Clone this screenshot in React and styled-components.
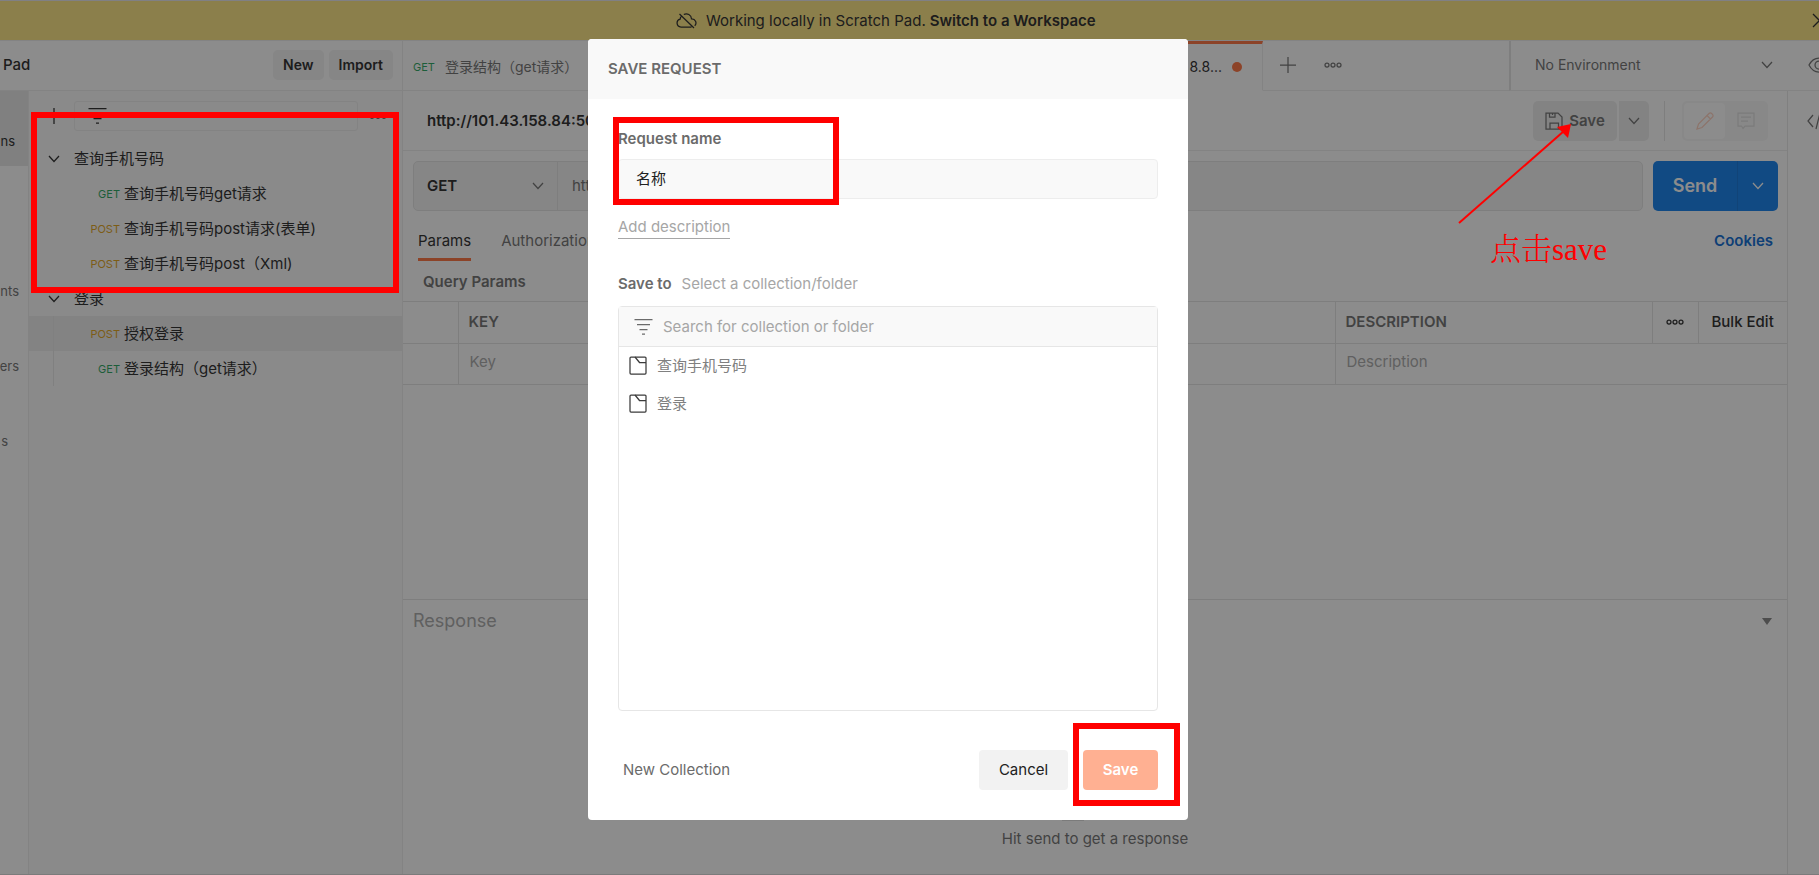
import React, { useState } from 'react';
import styled, { createGlobalStyle } from 'styled-components';

const GlobalStyle = createGlobalStyle`
  * {
    box-sizing: border-box;
  }

  html, body, #root {
    height: 100%;
  }

  body {
    margin: 0;
    overflow: hidden;
    background: #fff;
    color: #212121;
    font-family: Inter, "Noto Sans CJK SC", sans-serif;
    font-size: 15px;
    line-height: 20px;
  }

  button, input, select {
    font: inherit;
    color: inherit;
    border: none;
    background: none;
    padding: 0;
    margin: 0;
    outline: none;
  }

  button {
    cursor: pointer;
  }

  a {
    text-decoration: none;
  }
`;

const Page = styled.div`
  position: relative;
  display: flex;
  flex-direction: column;
  height: 100%;
  overflow: hidden;
`;

const Banner = styled.div`
  display: flex;
  align-items: center;
  height: 41px;
  flex: none;
  padding-left: 676px;
  background: #fde47c;
  border-top: 1px solid #e6e6ee;
  border-bottom: 1px solid #ededed;
`;

const BannerText = styled.span`
  margin-left: 9px;
`;

const BannerLink = styled.a`
  margin-left: 4px;
  color: #212121;
  font-weight: 600;
`;

const BannerClose = styled.button`
  display: flex;
  margin-left: auto;
  margin-right: -8px;
`;

const Columns = styled.div`
  display: flex;
  flex: 1;
  min-height: 0;
  border-bottom: 1px solid #dcdcdc;
`;

const Side = styled.div`
  display: flex;
  flex-direction: column;
  width: 403px;
  flex: none;
  border-right: 1px solid #ededed;
`;

const SideHeader = styled.header`
  display: flex;
  align-items: center;
  gap: 5px;
  height: 50px;
  flex: none;
  padding: 0 9px 1px 3px;
  border-bottom: 1px solid #ededed;
`;

const WorkspaceName = styled.span`
  flex: 1;
  font-weight: 500;
`;

const SmallButton = styled.button`
  height: 30px;
  padding: 0 10px;
  border-radius: 5px;
  background: #f2f2f2;
  font-size: 14px;
  font-weight: 600;
`;

const SideBody = styled.div`
  display: flex;
  flex: 1;
`;

const Rail = styled.nav`
  width: 29px;
  flex: none;
  border-right: 1px solid #ededed;
`;

const RailItem = styled.button`
  display: flex;
  align-items: flex-end;
  justify-content: flex-end;
  width: 100%;
  height: 75px;
  padding: 0 ${({ $inset }) => $inset}px 15px 0;
  background: ${({ $active }) => ($active ? '#e6e6e6' : 'none')};
  color: ${({ $active }) => ($active ? '#212121' : '#6b6b6b')};
  font-size: 13px;
`;

const Tree = styled.div`
  flex: 1;
  min-width: 0;
  background: #fafafa;
`;

const TreeTools = styled.div`
  display: flex;
  align-items: center;
  height: 50px;
  padding: 0 15px 0 17px;
`;

const IconButton = styled.button`
  display: flex;
  align-items: center;
  justify-content: center;
  flex: none;
`;

const FilterBox = styled.label`
  display: flex;
  align-items: center;
  flex: 1;
  height: 30px;
  margin: 0 11px 0 12px;
  padding-left: 13px;
  border: 1px solid #ededed;
  border-radius: 3px;

  input {
    flex: 1;
    min-width: 0;
  }
`;

const TreeRow = styled.div`
  display: flex;
  align-items: center;
  height: 35px;
  padding-left: ${({ $folder }) => ($folder ? 19 : 24)}px;
  background: ${({ $active }) => ($active ? '#ededed' : 'none')};
`;

const TreeGuide = styled.span`
  align-self: stretch;
  border-left: 1px solid ${({ $visible }) => ($visible ? '#e6e6e6' : 'transparent')};
`;

const FolderName = styled.span`
  margin-left: 14px;
`;

const Method = styled.span`
  color: ${({ $type }) => ($type === 'GET' ? '#1fa35b' : '#e0a010')};
  font-size: 11px;
`;

const TreeMethod = styled(Method)`
  width: 66px;
  margin-right: 4px;
  text-align: right;
`;

const Workbench = styled.main`
  display: flex;
  flex-direction: column;
  flex: 1;
  min-width: 0;
`;

const TabBar = styled.div`
  display: flex;
  height: 50px;
  flex: none;
`;

const Tab = styled.div`
  display: flex;
  align-items: center;
  justify-content: ${({ $active }) => ($active ? 'flex-end' : 'flex-start')};
  gap: 10px;
  width: ${({ $active }) => ($active ? 260 : 600)}px;
  flex: none;
  padding: ${({ $active }) => ($active ? '0 20px 0 10px' : '0 10px')};
  border-top: 3px solid ${({ $active }) => ($active ? '#ff6c37' : 'transparent')};
  border-right: ${({ $active }) => ($active ? '1px solid #ededed' : 'none')};
  border-bottom: 1px solid ${({ $active }) => ($active ? '#fff' : '#ededed')};
  color: ${({ $active }) => ($active ? '#212121' : '#6b6b6b')};
  font-size: 14px;
`;

const Unsaved = styled.i`
  width: 10px;
  height: 10px;
  border-radius: 50%;
  background: #ff6c37;
`;

const TabTools = styled.div`
  display: flex;
  align-items: center;
  gap: 28px;
  flex: 1;
  padding: 0 0 1px 17px;
  border-bottom: 1px solid #ededed;
  color: #6b6b6b;
`;

const Environment = styled.label`
  display: flex;
  align-items: center;
  width: 310px;
  padding: 0 0 1px 24px;
  border-left: 2px solid #e3e3e3;
  border-bottom: 1px solid #ededed;
  color: #6b6b6b;
  font-size: 14px;

  select {
    appearance: none;
    width: 226px;
    flex: none;
  }

  svg:last-child {
    margin-left: 35px;
  }
`;

const Work = styled.div`
  display: flex;
  flex: 1;
  min-height: 0;
`;

const Request = styled.section`
  display: flex;
  flex-direction: column;
  flex: 1;
  min-width: 0;
`;

const RightRail = styled.aside`
  width: 32px;
  flex: none;
  padding: 20px 0 0 19px;
  border-left: 1px solid #e6e6e6;
  overflow: hidden;
  color: #6b6b6b;
`;

const TitleRow = styled.div`
  display: flex;
  align-items: center;
  height: 60px;
  flex: none;
  padding: 0 19px 0 24px;
  border-bottom: 1px solid #ededed;
`;

const RequestTitle = styled.span`
  flex: 1;
  font-weight: 600;
`;

const GreyButton = styled.button`
  display: flex;
  align-items: center;
  justify-content: center;
  gap: 6px;
  width: ${({ $wide }) => ($wide ? 84 : 30)}px;
  height: 40px;
  margin-right: ${({ $wide }) => ($wide ? 2 : 15)}px;
  border-radius: ${({ $wide }) => ($wide ? '5px' : '0 5px 5px 0')};
  background: #ededed;
  color: #6b6b6b;
  font-weight: 600;
`;

const Separator = styled.span`
  width: 1px;
  height: 40px;
  margin-right: 17px;
  background: #e3e3e3;
`;

const ModeSwitch = styled.div`
  display: flex;
  align-items: center;
  width: 86px;
  height: 40px;
  padding: 2px;
  border-radius: 5px;
  background: #f7f7f7;
`;

const ModeButton = styled.button`
  display: flex;
  align-items: center;
  justify-content: center;
  width: 41px;
  height: 36px;
  border-radius: 4px;
  background: ${({ $active }) => ($active ? '#fff' : 'none')};
  color: ${({ $active }) => ($active ? '#ffcfbd' : '#dcdcdc')};
`;

const UrlRow = styled.div`
  display: flex;
  gap: 10px;
  padding: 10px 9px 0 10px;
`;

const UrlBox = styled.div`
  display: flex;
  flex: 1;
  height: 50px;
  border: 1px solid #e3e3e3;
  border-radius: 5px;
  background: #f2f2f2;
  color: #6b6b6b;

  input {
    flex: 1;
    padding-left: 14px;
  }
`;

const MethodSelect = styled.label`
  display: flex;
  align-items: center;
  width: 144px;
  padding: 0 13px;
  border-right: 1px solid #e3e3e3;

  select {
    appearance: none;
    flex: 1;
    color: #212121;
    font-weight: 600;
  }
`;

const SendGroup = styled.div`
  display: flex;
  width: 125px;
  border-radius: 5px;
  overflow: hidden;
  background: #097bed;
  color: #fff;
`;

const SendButton = styled.button`
  flex: 1;
  border-right: 1px solid #086fd6;
  font-size: 18px;
  font-weight: 600;
`;

const SendMore = styled(IconButton)`
  width: 40px;
`;

const SectionTabs = styled.div`
  display: flex;
  align-items: flex-start;
  gap: 30px;
  height: 60px;
  padding: 20px 14px 0 15px;
`;

const SectionTab = styled.button`
  height: 30px;
  padding-bottom: 7px;
  border-bottom: 3px solid ${({ $active }) => ($active ? '#ff6c37' : 'transparent')};
  color: ${({ $active }) => ($active ? '#212121' : '#6b6b6b')};
`;

const Cookies = styled.a`
  margin-left: auto;
  color: #0265d2;
  font-weight: 600;
`;

const ParamsTitle = styled.h2`
  margin: 0;
  padding: 1px 20px 9px;
  color: #6b6b6b;
  font-size: 15px;
  font-weight: 600;
`;

const ParamsTable = styled.table`
  width: 100%;
  table-layout: fixed;
  border-collapse: collapse;
  border-top: 1px solid #e3e3e3;

  th, td {
    height: 41px;
    padding: 0 10px;
    border-bottom: 1px solid #e3e3e3;
    border-left: 1px solid #e3e3e3;
    text-align: left;
    white-space: nowrap;
  }

  th {
    height: 42px;
    padding-bottom: 1px;
    color: #6b6b6b;
    font-weight: 600;
  }

  td {
    padding: 0 11px 4px;
  }

  th:first-child, td:first-child {
    border-left: none;
  }

  input {
    width: 100%;
  }

  input::placeholder {
    color: #a6a6a6;
    opacity: 1;
  }
`;

const ColumnMenu = styled(IconButton)`
  width: 100%;
  color: #212121;
`;

const BulkEdit = styled.button`
  padding-left: 3px;
  color: #212121;
  font-weight: 500;
`;

const Response = styled.section`
  display: flex;
  flex-direction: column;
  justify-content: space-between;
  height: 275px;
  flex: none;
  margin-top: auto;
  border-top: 1px solid #e3e3e3;
`;

const ResponseHead = styled.div`
  display: flex;
  align-items: center;
  justify-content: space-between;
  height: 42px;
  padding: 0 15px 0 10px;
  color: #a6a6a6;
  font-size: 18px;
`;

const ResponseHint = styled.p`
  display: flex;
  flex-direction: column;
  align-items: center;
  gap: 7px;
  margin: 0;
  padding-bottom: 25px;
  color: #6b6b6b;
`;

const Overlay = styled.div`
  position: absolute;
  inset: 0;
  background: rgba(26, 26, 26, 0.5);
`;

const Dialog = styled.form`
  position: absolute;
  top: 39px;
  left: 588px;
  width: 600px;
  border-radius: 4px;
  background: #fff;
  overflow: hidden;
`;

const DialogTitle = styled.h1`
  margin: 0;
  padding: 20px;
  background: #f9f9f9;
  color: #6b6b6b;
  font-size: 15px;
  font-weight: 600;
`;

const DialogBody = styled.div`
  display: flex;
  flex-direction: column;
  align-items: flex-start;
  padding: 30px 30px 0;
`;

const FieldLabel = styled.label`
  color: #6b6b6b;
  font-weight: 600;
`;

const NameInput = styled.input`
  && {
    width: 100%;
    height: 40px;
    margin-top: 10px;
    padding: 0 17px 3px;
    border: 1px solid #ededed;
    border-radius: 4px;
    background: #f9f9f9;
  }
`;

const AddDescription = styled.button`
  && {
    margin-top: 18px;
    padding-bottom: 1px;
    border-bottom: 1px solid #a6a6a6;
    color: #a6a6a6;
  }
`;

const SaveTo = styled.p`
  display: flex;
  gap: 10px;
  margin: 35px 0 12px;
  color: #a6a6a6;

  strong {
    color: #6b6b6b;
    font-weight: 600;
  }
`;

const Picker = styled.div`
  width: 100%;
  height: 405px;
  border: 1px solid #e6e6e6;
  border-radius: 4px;
`;

const PickerSearch = styled.label`
  display: flex;
  align-items: center;
  gap: 10px;
  height: 40px;
  padding: 0 15px;
  border-bottom: 1px solid #e6e6e6;
  background: #f9f9f9;
  color: #6b6b6b;

  input {
    flex: 1;
  }

  input::placeholder {
    color: #a6a6a6;
    opacity: 1;
  }
`;

const PickerItem = styled.button`
  display: flex;
  align-items: center;
  gap: 10px;
  width: 100%;
  height: 38px;
  padding: 0 10px 1px;
  color: #808080;

  svg {
    color: #3b3b3b;
  }
`;

const DialogFooter = styled.footer`
  display: flex;
  align-items: center;
  padding: 39px 30px 30px 35px;
`;

const NewCollection = styled.button`
  margin-right: auto;
  color: #6b6b6b;
`;

const DialogButton = styled.button`
  height: 40px;
  width: ${({ $primary }) => ($primary ? 75 : 89)}px;
  margin-left: ${({ $primary }) => ($primary ? 15 : 0)}px;
  border-radius: 4px;
  background: ${({ $primary }) => ($primary ? '#ffb092' : '#f2f2f2')};
  color: ${({ $primary }) => ($primary ? '#fff' : '#212121')};
  font-weight: ${({ $primary }) => ($primary ? 600 : 400)};
`;

const Highlight = styled.div`
  position: absolute;
  top: ${({ $top }) => $top}px;
  left: ${({ $left }) => $left}px;
  width: ${({ $width }) => $width}px;
  height: ${({ $height }) => $height}px;
  border: 6px solid #f00;
  pointer-events: none;
`;

const Arrow = styled.svg`
  position: absolute;
  top: 122px;
  left: 1455px;
  pointer-events: none;
`;

const Note = styled.span`
  position: absolute;
  top: 230px;
  left: 1490px;
  color: #f00;
  font-family: "Liberation Serif", "Noto Serif CJK SC", "Noto Sans CJK SC", serif;
  font-size: 31px;
  font-weight: 300;
  line-height: 40px;
`;

const Icon = styled.svg`
  flex: none;
  fill: none;
  stroke: currentColor;
  stroke-width: 1.25;
`;

const Svg = ({ size = 20, width = size, height = size, children }) => (
  <Icon width={width} height={height} viewBox={`0 0 ${width} ${height}`} aria-hidden="true">
    {children}
  </Icon>
);

const Chevron = () => (
  <Svg width={12} height={8}>
    <path d="M1 1l5 5.5L11 1" />
  </Svg>
);

const Filter = () => (
  <Svg width={19} height={18}>
    <path d="M0.5 1.5h18M3 6.5h13M5.500 11.500h8M8 16h3" />
  </Svg>
);

const Dots = () => (
  <Svg width={18} height={6}>
    <circle cx="3" cy="3" r="2" />
    <circle cx="9" cy="3" r="2" />
    <circle cx="15" cy="3" r="2" />
  </Svg>
);

const Plus = ({ size }) => (
  <Svg size={size}>
    <path d={`M${size / 2} 0v${size}M0 ${size / 2}h${size}`} />
  </Svg>
);

const CloudOff = () => (
  <Svg width={21} height={16}>
    <path d="M3.500 1l14.500 14M15.500 14H5a4 4 0 0 1-.8-7.900c0-1.100.5-2.100 1.200-2.900M7.800 1.500a5.200 5.200 0 0 1 7.700 4.300 4.100 4.100 0 0 1 3.200 7" />
  </Svg>
);

const Floppy = () => (
  <Svg width={18} height={18}>
    <path d="M1 1h12l4 4v12H1zM4.500 1v4h5.500V1M7.500 1v2M5 17v-6h8.500v6" />
  </Svg>
);

const Pencil = () => (
  <Svg width={18} height={18}>
    <path d="M1 17l1.500-5L13 1.500a1.800 1.800 0 0 1 2.600 0l.9.9a1.800 1.800 0 0 1 0 2.600L6 15.500zM11 3.500L14.500 7" />
  </Svg>
);

const Comment = () => (
  <Svg width={18} height={18}>
    <path d="M1 1h16v13H8l-2 2.500L4.500 14H1zM4 5h10M4 9h7" />
  </Svg>
);

const Eye = () => (
  <Svg width={22} height={16}>
    <path d="M1 8c2-4 5.500-7 10-7s8 3 10 7c-2 4-5.500 7-10 7S3 12 1 8z" />
    <circle cx="11" cy="8" r="4" />
  </Svg>
);

const Collection = () => (
  <Svg width={18} height={19}>
    <rect x="1" y="1" width="16" height="17" rx="1" />
    <path d="M6 1l4.500 5.500H17" />
  </Svg>
);

const railItems = [
  { label: 'ns', inset: 13, active: true },
  { label: '', inset: 0 },
  { label: 'nts', inset: 9 },
  { label: 'ers', inset: 9 },
  { label: 's', inset: 20 },
];

const collections = [
  {
    name: '查询手机号码',
    requests: [
      { method: 'GET', name: '查询手机号码get请求' },
      { method: 'POST', name: '查询手机号码post请求(表单)' },
      { method: 'POST', name: '查询手机号码post（Xml)' },
    ],
  },
  {
    name: '登录',
    guide: true,
    requests: [
      { method: 'POST', name: '授权登录', active: true },
      { method: 'GET', name: '登录结构（get请求）' },
    ],
  },
];

const Sidebar = () => (
  <Side>
    <SideHeader>
      <WorkspaceName>Pad</WorkspaceName>
      <SmallButton>New</SmallButton>
      <SmallButton>Import</SmallButton>
    </SideHeader>
    <SideBody>
      <Rail>
        {railItems.map((item, index) => (
          <RailItem key={index} $inset={item.inset} $active={item.active}>
            {item.label}
          </RailItem>
        ))}
      </Rail>
      <Tree>
        <TreeTools>
          <IconButton aria-label="Create"><Plus size={16} /></IconButton>
          <FilterBox>
            <Filter />
            <input aria-label="Filter" />
          </FilterBox>
          <IconButton aria-label="More"><Dots /></IconButton>
        </TreeTools>
        {collections.map((collection) => (
          <React.Fragment key={collection.name}>
            <TreeRow $folder>
              <IconButton aria-label="Toggle"><Chevron /></IconButton>
              <FolderName>{collection.name}</FolderName>
            </TreeRow>
            {collection.requests.map((request) => (
              <TreeRow key={request.name} $active={request.active}>
                <TreeGuide $visible={collection.guide} />
                <TreeMethod $type={request.method}>{request.method}</TreeMethod>
                <span>{request.name}</span>
              </TreeRow>
            ))}
          </React.Fragment>
        ))}
      </Tree>
    </SideBody>
  </Side>
);

const RequestPanel = () => (
  <Request>
    <TitleRow>
      <RequestTitle>http://101.43.158.84:50</RequestTitle>
      <GreyButton $wide><Floppy />Save</GreyButton>
      <GreyButton aria-label="Save options"><Chevron /></GreyButton>
      <Separator />
      <ModeSwitch>
        <ModeButton $active aria-label="Edit"><Pencil /></ModeButton>
        <ModeButton aria-label="Comments"><Comment /></ModeButton>
      </ModeSwitch>
    </TitleRow>
    <UrlRow>
      <UrlBox>
        <MethodSelect>
          <select aria-label="Method" defaultValue="GET">
            <option>GET</option>
            <option>POST</option>
          </select>
          <Chevron />
        </MethodSelect>
        <input aria-label="Request URL" defaultValue="http" />
      </UrlBox>
      <SendGroup>
        <SendButton>Send</SendButton>
        <SendMore aria-label="Send options"><Chevron /></SendMore>
      </SendGroup>
    </UrlRow>
    <SectionTabs>
      <SectionTab $active>Params</SectionTab>
      <SectionTab>Authorization</SectionTab>
      <Cookies href="#cookies">Cookies</Cookies>
    </SectionTabs>
    <ParamsTitle>Query Params</ParamsTitle>
    <ParamsTable>
      <colgroup>
        <col width="55" />
        <col />
        <col width="317" />
        <col width="46" />
        <col width="89" />
      </colgroup>
      <thead>
        <tr>
          <th />
          <th>KEY</th>
          <th>DESCRIPTION</th>
          <th><ColumnMenu aria-label="Columns"><Dots /></ColumnMenu></th>
          <th><BulkEdit>Bulk Edit</BulkEdit></th>
        </tr>
      </thead>
      <tbody>
        <tr>
          <td />
          <td><input placeholder="Key" aria-label="Key" /></td>
          <td colSpan="3"><input placeholder="Description" aria-label="Description" /></td>
        </tr>
      </tbody>
    </ParamsTable>
    <Response>
      <ResponseHead>
        Response
        <svg width="10" height="7" aria-hidden="true"><path d="M0 0h10L5 7z" fill="#808080" /></svg>
      </ResponseHead>
      <ResponseHint>
        <svg width="66" height="3" aria-hidden="true"><path d="M0 0h22v2H0z" fill="#dcdcdc" /></svg>
        Hit send to get a response
      </ResponseHint>
    </Response>
  </Request>
);

const SaveDialog = () => {
  const [name, setName] = useState('名称');

  return (
    <Dialog onSubmit={(event) => event.preventDefault()}>
      <DialogTitle>SAVE REQUEST</DialogTitle>
      <DialogBody>
        <FieldLabel htmlFor="request-name">Request name</FieldLabel>
        <NameInput
          id="request-name"
          value={name}
          onChange={(event) => setName(event.target.value)}
        />
        <AddDescription type="button">Add description</AddDescription>
        <SaveTo><strong>Save to</strong>Select a collection/folder</SaveTo>
        <Picker>
          <PickerSearch>
            <Filter />
            <input placeholder="Search for collection or folder" />
          </PickerSearch>
          {collections.map((collection) => (
            <PickerItem key={collection.name} type="button">
              <Collection />
              {collection.name}
            </PickerItem>
          ))}
        </Picker>
      </DialogBody>
      <DialogFooter>
        <NewCollection type="button">New Collection</NewCollection>
        <DialogButton type="button">Cancel</DialogButton>
        <DialogButton $primary>Save</DialogButton>
      </DialogFooter>
    </Dialog>
  );
};

const App = () => (
  <>
    <GlobalStyle />
    <Page>
      <Banner>
        <CloudOff />
        <BannerText>Working locally in Scratch Pad.</BannerText>
        <BannerLink href="#workspace">Switch to a Workspace</BannerLink>
        <BannerClose aria-label="Close">
          <Svg size={15}><path d="M1 1l13 13M14 1L1 14" /></Svg>
        </BannerClose>
      </Banner>
      <Columns>
        <Sidebar />
        <Workbench>
          <TabBar>
            <Tab>
              <Method $type="GET">GET</Method>
              登录结构（get请求）
            </Tab>
            <Tab $active>8.8...<Unsaved /></Tab>
            <TabTools>
              <IconButton aria-label="New tab"><Plus size={16} /></IconButton>
              <IconButton aria-label="Tab options"><Dots /></IconButton>
            </TabTools>
            <Environment>
              <select aria-label="Environment">
                <option>No Environment</option>
              </select>
              <Chevron />
              <Eye />
            </Environment>
          </TabBar>
          <Work>
            <RequestPanel />
            <RightRail>
              <Svg width={24} height={20}><path d="M6 4L1 10l5 6M13 2L9 18M16 4l5 6-5 6" /></Svg>
            </RightRail>
          </Work>
        </Workbench>
      </Columns>
      <Overlay>
        <SaveDialog />
        <Highlight $left={31} $top={112} $width={368} $height={181} />
        <Highlight $left={613} $top={117} $width={226} $height={88} />
        <Highlight $left={1073} $top={723} $width={107} $height={83} />
        <Arrow width="120" height="105">
          <path d="M4 101L109 9" stroke="#f00" strokeWidth="2" />
          <path d="M116 2L102 5l11 11z" fill="#f00" />
        </Arrow>
        <Note>点击save</Note>
      </Overlay>
    </Page>
  </>
);

export default App;
